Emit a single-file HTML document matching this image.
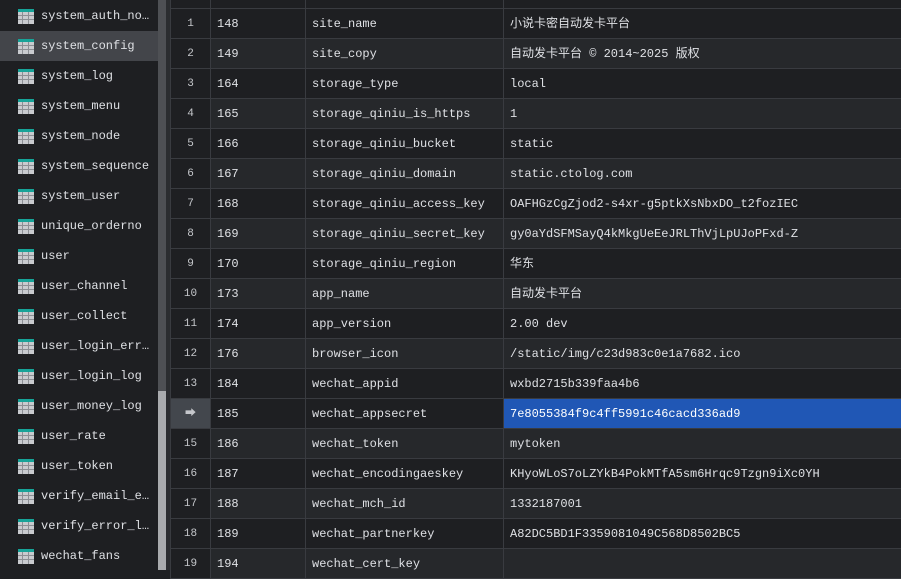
<!DOCTYPE html><html><head><meta charset="utf-8"><style>
*{margin:0;padding:0;box-sizing:border-box}
body{width:901px;height:570px;overflow:hidden;background:#1e1f22;font-family:"Liberation Mono","Noto Sans CJK SC",monospace;font-size:12px;color:#dfe1e5;position:relative}
.sb{position:absolute;left:0;top:0;width:158px;height:570px;background:#1e1f22}
.it{position:absolute;left:0;width:158px;height:30px;line-height:30px;padding-left:41px;white-space:nowrap;color:#dfe1e5}
.it.sel{background:#43454a}
.ic{position:absolute;left:18px;top:8px;width:16px;height:15px;background:#c9cbcf;border-top:3px solid #17a398;
background-image:linear-gradient(90deg,transparent 4px,#8c8f94 4px,#8c8f94 5px,transparent 5px,transparent 10px,#8c8f94 10px,#8c8f94 11px,transparent 11px),linear-gradient(transparent 3px,#8c8f94 3px,#8c8f94 4px,transparent 4px,transparent 7px,#8c8f94 7px,#8c8f94 8px,transparent 8px)}
.scr1{position:absolute;left:158px;top:0;width:8px;height:391px;background:#4e5054}
.scr2{position:absolute;left:158px;top:391px;width:8px;height:179px;background:#a9abae}
.gap{position:absolute;left:166px;top:0;width:4px;height:570px;background:#2b2d30}
table{position:absolute;left:170px;top:-22px;border-collapse:collapse;table-layout:fixed;width:740px}
td{height:30px;border:1px solid #393b40;padding:0 0 0 6px;white-space:nowrap;overflow:hidden;line-height:28px}
tr{height:30px}
td.n{text-align:center;padding:0;font-size:11px;color:#c5c7cb}
tr.e td:not(.n){background:#26282b}
tr.h td{color:#6f737a;font-size:11px}
.cur td.n{background:#43474d}
td.s{background:#2057b5!important;color:#fff}
</style></head><body>
<div class="sb">
<div class="it" style="top:1px"><span class="ic"></span>system_auth_no…</div>
<div class="it sel" style="top:31px"><span class="ic"></span>system_config</div>
<div class="it" style="top:61px"><span class="ic"></span>system_log</div>
<div class="it" style="top:91px"><span class="ic"></span>system_menu</div>
<div class="it" style="top:121px"><span class="ic"></span>system_node</div>
<div class="it" style="top:151px"><span class="ic"></span>system_sequence</div>
<div class="it" style="top:181px"><span class="ic"></span>system_user</div>
<div class="it" style="top:211px"><span class="ic"></span>unique_orderno</div>
<div class="it" style="top:241px"><span class="ic"></span>user</div>
<div class="it" style="top:271px"><span class="ic"></span>user_channel</div>
<div class="it" style="top:301px"><span class="ic"></span>user_collect</div>
<div class="it" style="top:331px"><span class="ic"></span>user_login_err…</div>
<div class="it" style="top:361px"><span class="ic"></span>user_login_log</div>
<div class="it" style="top:391px"><span class="ic"></span>user_money_log</div>
<div class="it" style="top:421px"><span class="ic"></span>user_rate</div>
<div class="it" style="top:451px"><span class="ic"></span>user_token</div>
<div class="it" style="top:481px"><span class="ic"></span>verify_email_e…</div>
<div class="it" style="top:511px"><span class="ic"></span>verify_error_l…</div>
<div class="it" style="top:541px"><span class="ic"></span>wechat_fans</div>
</div>
<div class="scr1"></div><div class="scr2"></div><div class="gap"></div>
<table>
<colgroup><col style="width:40px"><col style="width:95px"><col style="width:198px"><col style="width:407px"></colgroup>
<tr class="h"><td class="n"></td><td>INT</td><td>VARCHAR 配置编码</td><td>VARCHAR 配置值</td></tr>
<tr><td class="n">1</td><td>148</td><td>site_name</td><td>小说卡密自动发卡平台</td></tr>
<tr class="e"><td class="n">2</td><td>149</td><td>site_copy</td><td>自动发卡平台 © 2014~2025 版权</td></tr>
<tr><td class="n">3</td><td>164</td><td>storage_type</td><td>local</td></tr>
<tr class="e"><td class="n">4</td><td>165</td><td>storage_qiniu_is_https</td><td>1</td></tr>
<tr><td class="n">5</td><td>166</td><td>storage_qiniu_bucket</td><td>static</td></tr>
<tr class="e"><td class="n">6</td><td>167</td><td>storage_qiniu_domain</td><td>static.ctolog.com</td></tr>
<tr><td class="n">7</td><td>168</td><td>storage_qiniu_access_key</td><td>OAFHGzCgZjod2-s4xr-g5ptkXsNbxDO_t2fozIEC</td></tr>
<tr class="e"><td class="n">8</td><td>169</td><td>storage_qiniu_secret_key</td><td>gy0aYdSFMSayQ4kMkgUeEeJRLThVjLpUJoPFxd-Z</td></tr>
<tr><td class="n">9</td><td>170</td><td>storage_qiniu_region</td><td>华东</td></tr>
<tr class="e"><td class="n">10</td><td>173</td><td>app_name</td><td>自动发卡平台</td></tr>
<tr><td class="n">11</td><td>174</td><td>app_version</td><td>2.00 dev</td></tr>
<tr class="e"><td class="n">12</td><td>176</td><td>browser_icon</td><td>/static/img/c23d983c0e1a7682.ico</td></tr>
<tr><td class="n">13</td><td>184</td><td>wechat_appid</td><td>wxbd2715b339faa4b6</td></tr>
<tr class="cur"><td class="n">➡</td><td>185</td><td>wechat_appsecret</td><td class="s">7e8055384f9c4ff5991c46cacd336ad9</td></tr>
<tr class="e"><td class="n">15</td><td>186</td><td>wechat_token</td><td>mytoken</td></tr>
<tr><td class="n">16</td><td>187</td><td>wechat_encodingaeskey</td><td>KHyoWLoS7oLZYkB4PokMTfA5sm6Hrqc9Tzgn9iXc0YH</td></tr>
<tr class="e"><td class="n">17</td><td>188</td><td>wechat_mch_id</td><td>1332187001</td></tr>
<tr><td class="n">18</td><td>189</td><td>wechat_partnerkey</td><td>A82DC5BD1F3359081049C568D8502BC5</td></tr>
<tr class="e"><td class="n">19</td><td>194</td><td>wechat_cert_key</td><td></td></tr>
</table>
</body></html>
